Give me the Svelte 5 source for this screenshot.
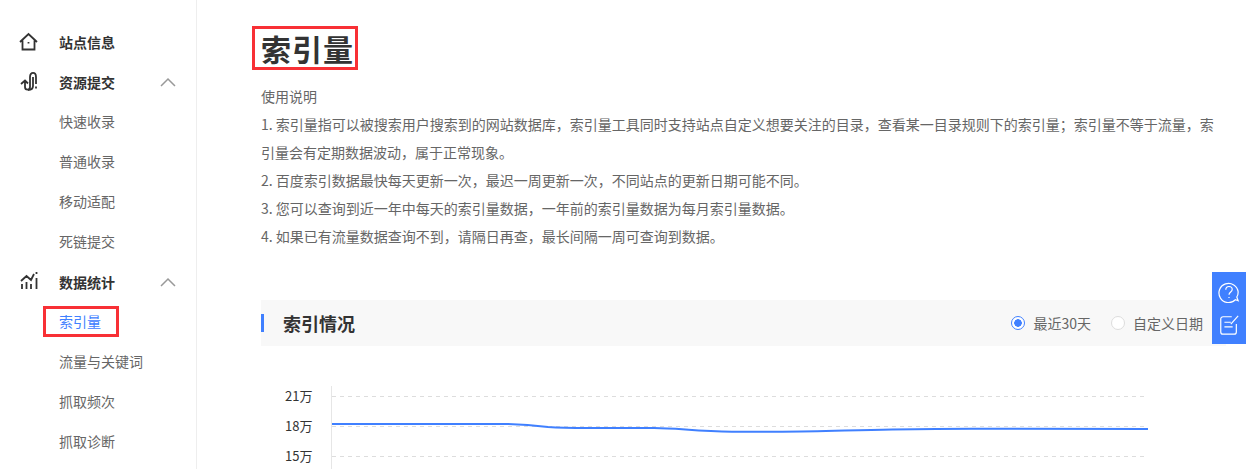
<script>
  const subA = ['快速收录', '普通收录', '移动适配', '死链提交'];
  const subB = ['索引量', '流量与关键词', '抓取频次', '抓取诊断'];
  const notes = [
    '1. 索引量指可以被搜索用户搜索到的网站数据库，索引量工具同时支持站点自定义想要关注的目录，查看某一目录规则下的索引量；索引量不等于流量，索引量会有定期数据波动，属于正常现象。',
    '2. 百度索引数据最快每天更新一次，最迟一周更新一次，不同站点的更新日期可能不同。',
    '3. 您可以查询到近一年中每天的索引量数据，一年前的索引量数据为每月索引量数据。',
    '4. 如果已有流量数据查询不到，请隔日再查，最长间隔一周可查询到数据。'
  ];
</script>

<div class="page">
  <aside class="side">
    <div class="group">
      <svg class="ico" viewBox="0 0 20 20"><path d="M1 11 9.500 3 18 11M3.500 9.500V18.500H15.500V9.500M9.500 11v1.500" /></svg>
      <span>站点信息</span>
    </div>
    <div class="group">
      <svg class="ico" viewBox="0 0 20 20"><path d="M2 13 6 9.500 9 12.500M6 10V16C6 19.500 11 19.500 11 16V6C11 .500 17 .500 17 6V13M17 15.500V17.500M14 6V15C14 18 12 19 9 19" /></svg>
      <span>资源提交</span>
      <svg class="arrow" viewBox="0 0 16 10"><path d="M1 9 8 2l7 7" /></svg>
    </div>
    {#each subA as s}
      <div class="sub">{s}</div>
    {/each}
    <div class="group">
      <svg class="ico" viewBox="0 0 20 20"><path d="M3 18v-5M7.500 18v-7M12 18v-5M17.500 18V7M2 10 7.500 5 12 9 15 3M17.500 1v2" /></svg>
      <span>数据统计</span>
      <svg class="arrow" viewBox="0 0 16 10"><path d="M1 9 8 2l7 7" /></svg>
    </div>
    {#each subB as s, i}
      <div class="sub" class:on={i === 0}><span class:mark={i === 0}>{s}</span></div>
    {/each}
  </aside>

  <main class="main">
    <h1><span class="title">索引量</span></h1>
    <div class="notes">
      <p>使用说明</p>
      {#each notes as n}
        <p>{n}</p>
      {/each}
    </div>

    <div class="bar">
      <h2>索引情况</h2>
      <label class="radio"><i class="dot on"></i>最近30天</label>
      <label class="radio"><i class="dot"></i>自定义日期</label>
    </div>

    <div class="chart">
      <div class="axis">
        <span>21万</span><span>18万</span><span>15万</span>
      </div>
      <div class="plot">
        <div class="grid"></div>
        <div class="grid"></div>
        <div class="grid"></div>
        <svg class="line" viewBox="0 0 816 80" preserveAspectRatio="none">
          <path d="M0 38 170 38C190 38 200 39 216 41 230 42 240 42 256 42L322 42C345 42 365 45.500 400 45.700L450 45.700C490 45.700 520 44 560 43.500 590 43 610 42.700 640 42.700L816 42.900" />
        </svg>
      </div>
    </div>
  </main>

  <div class="float">
    <svg viewBox="0 0 24 24"><path d="M22 21.500l-3-1A10.500 10.500 0 1 1 22 12c0 2-.5 4-1.500 5.500zM8.500 9.500C8.500 7.500 10 6 12 6s3.500 1.500 3.500 3.300c0 2.700-3.500 2.700-3.500 5.700M12 17.500v1" /></svg>
    <svg viewBox="0 0 24 24"><path d="M20 11v8.500a2.500 2.500 0 0 1-2.500 2.500h-12A2.500 2.500 0 0 1 3 19.500v-14A2.500 2.500 0 0 1 5.500 3H15M7 9h7M7 14h9M14 11 22 2" /></svg>
  </div>
</div>

<style>
  :global(body) {
    margin: 0;
    background: #fff;
    overflow: hidden;
  }
  .page {
    display: flex;
    height: 469px;
    overflow: hidden;
    position: relative;
    font-family: "Noto Sans CJK SC", "Liberation Sans", sans-serif;
    font-size: 14px;
    color: #666;
  }
  .side {
    width: 196px;
    flex: none;
    border-right: 1px solid #eee;
    padding-top: 22px;
  }
  .group, .sub {
    height: 40px;
    line-height: 38px;
    padding-left: 59px;
    position: relative;
  }
  .group {
    line-height: 40px;
    color: #333;
    font-weight: 700;
    display: flex;
    align-items: center;
  }
  .ico {
    position: absolute;
    left: 19px;
    top: 9px;
    width: 20px;
    height: 20px;
    fill: none;
    stroke: #333;
    stroke-width: 1.800;
  }
  .arrow {
    position: absolute;
    left: 160px;
    top: 15px;
    width: 16px;
    height: 10px;
    fill: none;
    stroke: #999;
    stroke-width: 1.500;
  }
  .sub.on {
    color: #4080ff;
  }
  .mark {
    position: relative;
    display: inline-block;
  }
  .mark::after, .title::after {
    content: "";
    position: absolute;
    border: 3px solid #f83035;
    pointer-events: none;
  }
  .mark::after {
    left: -16px;
    right: -18px;
    top: 4px;
    bottom: 3px;
  }
  .main {
    flex: 1;
    min-width: 0;
    padding: 0 20px 0 64px;
  }
  h1 {
    margin: 0;
    padding-top: 30px;
    height: 50px;
    font-size: 30px;
    line-height: 36px;
    color: #333;
    font-weight: 700;
  }
  .title {
    position: relative;
    display: inline-block;
    letter-spacing: 1px;
  }
  .title::after {
    left: -9px;
    right: -4px;
    top: -4px;
    bottom: -4px;
  }
  .notes {
    margin-top: 2px;
    font-size: 14px;
    line-height: 28px;
  }
  .notes p {
    margin: 0;
  }
  .bar {
    display: flex;
    align-items: center;
    height: 46px;
    margin-top: 50px;
    background: #f8f8f8;
    position: relative;
    padding-right: 23px;
  }
  .bar::before {
    content: "";
    position: absolute;
    left: 0;
    top: 14px;
    width: 3px;
    height: 18px;
    background: #4080ff;
  }
  h2 {
    margin: 0 auto 0 22px;
    font-size: 18px;
    color: #333;
    font-weight: 700;
  }
  .radio {
    display: flex;
    align-items: center;
    font-size: 14px;
    margin-left: 20px;
  }
  .dot {
    width: 14px;
    height: 14px;
    border-radius: 50%;
    border: 1px solid #ddd;
    box-sizing: border-box;
    margin-right: 8px;
    background: #fff;
  }
  .dot.on {
    border-color: #4080ff;
    background: radial-gradient(circle, #4080ff 0 3.500px, #fff 4px);
  }
  .chart {
    display: flex;
    margin-top: 40px;
  }
  .axis {
    width: 70px;
    flex: none;
    display: flex;
    flex-direction: column;
    color: #333;
    font-size: 13px;
    padding-left: 24px;
    box-sizing: border-box;
  }
  .axis span {
    height: 30px;
    line-height: 20px;
  }
  .plot {
    flex: none;
    width: 813px;
    height: 90px;
    border-left: 1px solid #e6e6e6;
    position: relative;
    padding-top: 10px;
    box-sizing: border-box;
  }
  .grid {
    height: 30px;
    background: repeating-linear-gradient(90deg, #ddd 0 4px, transparent 4px 8px) top left / 100% 1px no-repeat;
  }
  .line {
    position: absolute;
    left: 0;
    top: 0;
    width: 816px;
    height: 80px;
    fill: none;
    stroke: #4080ff;
    stroke-width: 2;
  }
  .float {
    position: absolute;
    right: 0;
    top: 272px;
    width: 34px;
    height: 72px;
    background: #4080ff;
    display: flex;
    flex-direction: column;
    align-items: center;
    justify-content: space-around;
    padding: 3px 0;
    box-sizing: border-box;
  }
  .float svg {
    width: 22px;
    height: 22px;
    fill: none;
    stroke: #fff;
    stroke-width: 1.300;
  }
</style>
